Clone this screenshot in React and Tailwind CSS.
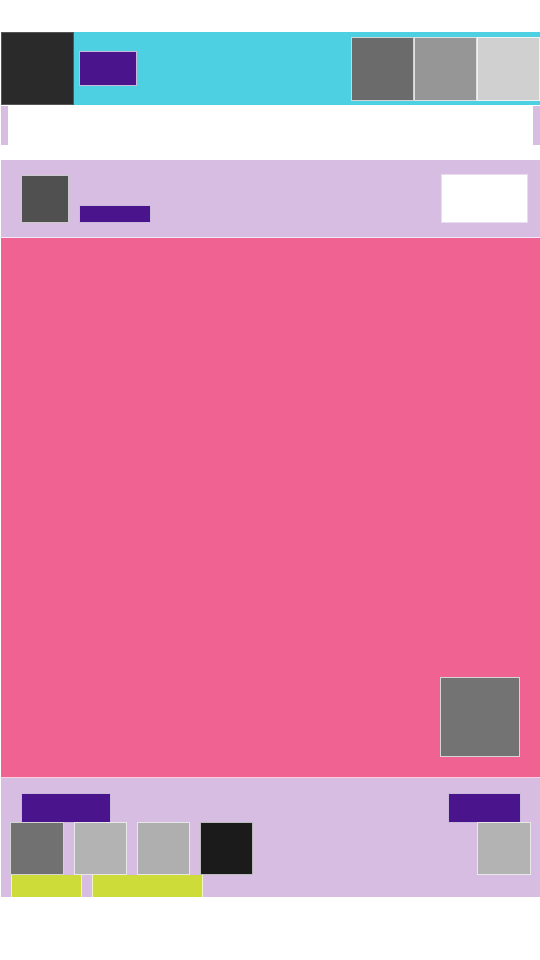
export default function App() {
  const bd = "border border-white/70";
  return (
    <div className="w-[540px] h-[960px] bg-white pt-[32px] pl-[1px] font-['Liberation_Sans',sans-serif]">
      {/* header */}
      <div className="flex h-[73px]">
        <div className={`w-[73px] h-[73px] bg-[#2a2a2a] border border-[#555]`} />
        <div className="flex-1 bg-[#4dd0e1] flex justify-between">
          <div className={`ml-[5px] mt-[19px] w-[58px] h-[35px] bg-[#4a148c] ${bd}`} />
          <div className="flex mt-[5px] h-[64px]">
            <div className={`w-[63px] h-[64px] bg-[#6b6b6b] ${bd}`} />
            <div className={`w-[63px] h-[64px] bg-[#969696] ${bd}`} />
            <div className={`w-[63px] h-[64px] bg-[#d0d0d0] ${bd}`} />
          </div>
        </div>
      </div>
      {/* slivers */}
      <div className="flex justify-between mt-[1px] h-[39px]">
        <div className="w-[7px] h-[39px] bg-[#d7bde2]" />
        <div className="w-[7px] h-[39px] bg-[#d7bde2]" />
      </div>
      {/* section 2 */}
      <div className="mt-[15px] h-[78px] bg-[#d7bde2] border-b border-white/70 flex justify-between pt-[14px] pl-[20px] pr-[12px]">
        <div className="flex items-end h-[49px] gap-[10px]">
          <div className={`w-[48px] h-[48px] bg-[#505050] ${bd}`} />
          <div className={`w-[72px] h-[18px] bg-[#4a148c] ${bd}`} />
        </div>
        <div className={`w-[87px] h-[49px] bg-white border border-[#e8dcef]`} />
      </div>
      {/* pink */}
      <div className="h-[540px] bg-[#f06292] border-b border-white/70 flex justify-end items-end pr-[20px] pb-[20px]">
        <div className={`w-[80px] h-[80px] bg-[#737373] ${bd}`} />
      </div>
      {/* bottom */}
      <div className="h-[119px] bg-[#d7bde2] flex justify-between pt-[15px] pr-[9px]">
        <div className="flex flex-col">
          <div className={`ml-[20px] w-[90px] h-[30px] bg-[#4a148c] ${bd}`} />
          <div className="flex gap-[10px] ml-[9px] -mt-[1px]">
            <div className={`w-[54px] h-[53px] bg-[#717171] ${bd}`} />
            <div className={`w-[53px] h-[53px] bg-[#b3b3b3] ${bd}`} />
            <div className={`w-[53px] h-[53px] bg-[#afafaf] ${bd}`} />
            <div className={`w-[53px] h-[53px] bg-[#1b1b1b] ${bd}`} />
          </div>
          <div className="flex gap-[10px] ml-[10px]">
            <div className={`w-[71px] h-[22px] bg-[#cddc39] border-x border-white/70`} />
            <div className={`w-[111px] h-[22px] bg-[#cddc39] border-x border-white/70`} />
          </div>
        </div>
        <div className="flex flex-col items-end">
          <div className={`mr-[10px] w-[73px] h-[30px] bg-[#4a148c] ${bd}`} />
          <div className={`-mt-[1px] w-[54px] h-[53px] bg-[#b3b3b3] ${bd}`} />
        </div>
      </div>
    </div>
  );
}
